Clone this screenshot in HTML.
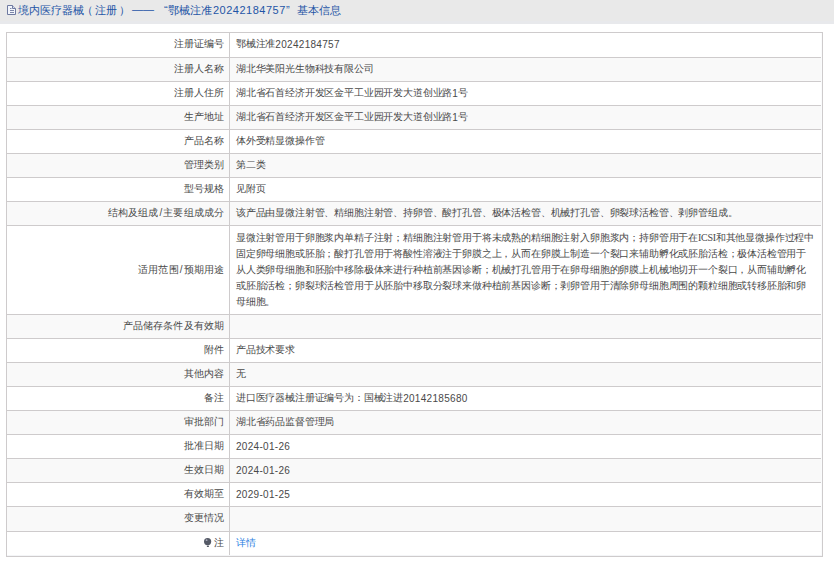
<!DOCTYPE html>
<html><head><meta charset="utf-8"><style>
html,body{margin:0;padding:0;background:#fff;}
body{width:834px;height:561px;position:relative;overflow:hidden;font-family:"Liberation Sans",sans-serif;font-size:10px;letter-spacing:-0.17px;color:#494949;}
.hd{position:absolute;left:0;top:0;width:834px;height:24px;background:#e9e9e9;}
.ttl{position:absolute;top:0;height:24px;line-height:20px;font-size:11px;letter-spacing:0;color:#1f55a6;white-space:nowrap;}
.ic{position:absolute;left:7px;top:5px;}
.r{position:absolute;left:7px;width:814px;}
.h{position:absolute;left:6px;width:815px;height:1px;background:#cecbcc;}
.v{position:absolute;width:1px;background:#cecbcc;}
.lb{position:absolute;right:610px;text-align:right;white-space:nowrap;line-height:16px;letter-spacing:0.1px;}
.sl{padding:0 1px;}
.vl{position:absolute;left:236px;white-space:nowrap;line-height:16px;}
a{color:#2b7fe2;text-decoration:none;}
.n{letter-spacing:0.3px;position:relative;top:1px;}
.hn{letter-spacing:0.5px;}
.sf{font-family:"Liberation Serif",serif;letter-spacing:-0.3px;}
</style></head><body>

<div class="hd"></div><div style="position:absolute;left:0;top:21px;width:834px;height:3px;background:#e8e9ec"></div>
<svg style="position:absolute;left:0;top:0" width="20" height="20" viewBox="0 0 20 20"><path d="M7.5 5.5H12.5L15.5 8.5V14.5H7.5Z" fill="#f2f5fb" stroke="#6f7aa0" stroke-width="1"/><path d="M12.5 5.5V8.5H15.5" fill="#d5dbee" stroke="#6f7aa0" stroke-width="1"/><rect x="10" y="8" width="1.5" height="1" fill="#7d86a8"/><rect x="10" y="10" width="4" height="1" fill="#7d86a8"/><rect x="10" y="12" width="4" height="1" fill="#7d86a8"/></svg>
<div class="ttl" style="left:18px">境内医疗器械</div>
<div class="ttl" style="left:82px">（</div>
<div class="ttl" style="left:95px">注册</div>
<div class="ttl" style="left:119px">）</div>
<div class="ttl" style="left:132px"><span style="position:relative;top:-1px">——</span></div>
<div class="ttl" style="left:164px">“</div>
<div class="ttl" style="left:168px">鄂械注准</div>
<div class="ttl" style="left:213px"><span class="hn">20242184757</span></div>
<div class="ttl" style="left:286px">”</div>
<div class="ttl" style="left:297px">基本信息</div>
<div class="r" style="top:58px;height:23px;background:#f9f9f9"></div>
<div class="r" style="top:106px;height:23px;background:#f9f9f9"></div>
<div class="r" style="top:154px;height:23px;background:#f9f9f9"></div>
<div class="r" style="top:202px;height:23px;background:#f9f9f9"></div>
<div class="r" style="top:315px;height:23px;background:#f9f9f9"></div>
<div class="r" style="top:363px;height:23px;background:#f9f9f9"></div>
<div class="r" style="top:411px;height:23px;background:#f9f9f9"></div>
<div class="r" style="top:459px;height:23px;background:#f9f9f9"></div>
<div class="r" style="top:507px;height:24px;background:#f9f9f9"></div>
<div class="h" style="top:32px"></div>
<div class="h" style="top:57px"></div>
<div class="h" style="top:81px"></div>
<div class="h" style="top:105px"></div>
<div class="h" style="top:129px"></div>
<div class="h" style="top:153px"></div>
<div class="h" style="top:177px"></div>
<div class="h" style="top:201px"></div>
<div class="h" style="top:225px"></div>
<div class="h" style="top:314px"></div>
<div class="h" style="top:338px"></div>
<div class="h" style="top:362px"></div>
<div class="h" style="top:386px"></div>
<div class="h" style="top:410px"></div>
<div class="h" style="top:434px"></div>
<div class="h" style="top:458px"></div>
<div class="h" style="top:482px"></div>
<div class="h" style="top:506px"></div>
<div class="h" style="top:531px"></div>
<div class="h" style="top:556px"></div>
<div class="h" style="top:32px;width:817px"></div><div class="h" style="top:556px;width:817px"></div>
<div class="v" style="left:6px;top:32px;height:525px"></div>
<div style="position:absolute;left:821px;top:33px;width:1px;height:523px;background:#fafbfc"></div>
<div class="v" style="left:822px;top:32px;height:525px"></div>
<div class="v" style="left:229px;top:32px;height:523px"></div>
<div style="position:absolute;left:7px;top:555px;width:815px;height:1px;background:#f4f5f7"></div>
<div class="lb" style="top:36.0px">注册证编号</div>
<div class="vl" style="top:36.0px">鄂械注准<span class="n">20242184757</span></div>
<div class="lb" style="top:61.0px">注册人名称</div>
<div class="vl" style="top:61.0px">湖北华美阳光生物科技有限公司</div>
<div class="lb" style="top:85.0px">注册人住所</div>
<div class="vl" style="top:85.0px">湖北省石首经济开发区金平工业园开发大道创业路<span class="n">1</span>号</div>
<div class="lb" style="top:109.0px">生产地址</div>
<div class="vl" style="top:109.0px">湖北省石首经济开发区金平工业园开发大道创业路<span class="n">1</span>号</div>
<div class="lb" style="top:133.0px">产品名称</div>
<div class="vl" style="top:133.0px">体外受精显微操作管</div>
<div class="lb" style="top:157.0px">管理类别</div>
<div class="vl" style="top:157.0px">第二类</div>
<div class="lb" style="top:181.0px">型号规格</div>
<div class="vl" style="top:181.0px">见附页</div>
<div class="lb" style="top:205.0px">结构及组成<span class="sl">/</span>主要组成成分</div>
<div class="vl" style="top:205.0px">该产品由显微注射管、精细胞注射管、持卵管、酸打孔管、极体活检管、机械打孔管、卵裂球活检管、剥卵管组成。</div>
<div class="lb" style="top:262.0px">适用范围<span class="sl">/</span>预期用途</div>
<div class="vl" style="top:230.0px">显微注射管用于卵胞浆内单精子注射；精细胞注射管用于将未成熟的精细胞注射入卵胞浆内；持卵管用于在<span class="sf">ICSI</span>和其他显微操作过程中<br>固定卵母细胞或胚胎；酸打孔管用于将酸性溶液注于卵膜之上，从而在卵膜上制造一个裂口来辅助孵化或胚胎活检；极体活检管用于<br>从人类卵母细胞和胚胎中移除极体来进行种植前基因诊断；机械打孔管用于在卵母细胞的卵膜上机械地切开一个裂口，从而辅助孵化<br>或胚胎活检；卵裂球活检管用于从胚胎中移取分裂球来做种植前基因诊断；剥卵管用于清除卵母细胞周围的颗粒细胞或转移胚胎和卵<br>母细胞。</div>
<div class="lb" style="top:318.0px">产品储存条件及有效期</div>
<div class="lb" style="top:342.0px">附件</div>
<div class="vl" style="top:342.0px">产品技术要求</div>
<div class="lb" style="top:366.0px">其他内容</div>
<div class="vl" style="top:366.0px">无</div>
<div class="lb" style="top:390.0px">备注</div>
<div class="vl" style="top:390.0px">进口医疗器械注册证编号为：国械注进<span class="n">20142185680</span></div>
<div class="lb" style="top:414.0px">审批部门</div>
<div class="vl" style="top:414.0px">湖北省药品监督管理局</div>
<div class="lb" style="top:438.0px">批准日期</div>
<div class="vl" style="top:438.0px"><span class="n">2024-01-26</span></div>
<div class="lb" style="top:462.0px">生效日期</div>
<div class="vl" style="top:462.0px"><span class="n">2024-01-26</span></div>
<div class="lb" style="top:486.0px">有效期至</div>
<div class="vl" style="top:486.0px"><span class="n">2029-01-25</span></div>
<div class="lb" style="top:510.0px">变更情况</div>
<div class="lb" style="top:535.0px"><svg width="8" height="11" viewBox="0 0 8 11" style="vertical-align:-2px;margin-right:2px"><circle cx="3.6" cy="4.6" r="3.6" fill="#555a66"/><circle cx="2.6" cy="3.2" r="0.9" fill="#aab"/><rect x="2.9" y="8.6" width="2" height="1.4" fill="#555a66"/></svg>注</div>
<div class="vl" style="top:535.0px"><a>详情</a></div>
</body></html>
